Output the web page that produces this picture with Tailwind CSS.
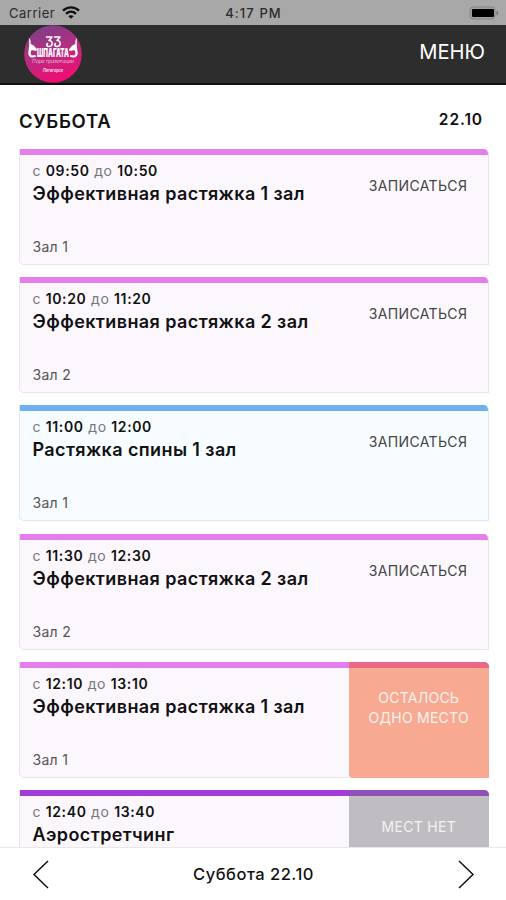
<!DOCTYPE html>
<html lang="ru">
<head>
  <meta charset="UTF-8" />
  <meta name="viewport" content="width=device-width, initial-scale=1.0" />
  <title>Расписание</title>
  <script src="https://cdn.jsdelivr.net/npm/@tailwindcss/browser@4"></script>
</head>
<body class="bg-white h-[900px] overflow-hidden flex flex-col font-['Inter','Liberation_Sans',sans-serif] text-[#111]">

  <!-- status bar -->
  <div class="h-[25px] shrink-0 bg-[#a8a8a8] grid grid-cols-3 items-center pl-[9px] pr-[6px] text-[13px] leading-[23px] text-[#2b2b2b]">
    <div class="flex items-center gap-[7px] pt-[2px]">
      <span class="tracking-[0.5px]">Carrier</span>
      <svg class="w-[18px] h-[13px] -mt-[3px]" viewBox="0 0 18 13" fill="none" stroke="#111" stroke-width="2.3">
        <path d="M1 4.6C5.6.2 12.4.2 17 4.6" />
        <path d="M4 7.8c3-2.8 7-2.8 10 0" />
        <path d="M9 12.8 6.3 10.2c1.6-1.4 3.8-1.4 5.4 0z" fill="#111" stroke="none" />
      </svg>
    </div>
    <div class="text-center pt-[2px] pr-[2px] font-medium tracking-[1.1px]">4:17 PM</div>
    <svg class="w-[31px] h-[14px] justify-self-end" viewBox="0 0 31 14">
      <rect x="1" y="1" width="25" height="12" rx="3" fill="#a0a0a0" stroke="#858585" />
      <rect x="3" y="3" width="22" height="8" rx="1" fill="#000" />
      <path d="M27.5 4.5v5c2.4-.8 2.4-4.2 0-5z" fill="#777" />
    </svg>
  </div>

  <!-- header -->
  <header class="h-[60px] shrink-0 bg-[#2d2d2d] border-b-2 border-[#111] flex items-center justify-between pl-[24px] pr-[21px]">
    <svg class="w-[58px] h-[58px]" viewBox="0 0 58 58">
      <defs>
        <linearGradient id="logo" x1="0.3" y1="0" x2="0.6" y2="1">
          <stop offset="0" stop-color="#7d3f86" />
          <stop offset="0.5" stop-color="#b92c80" />
          <stop offset="1" stop-color="#f40b72" />
        </linearGradient>
      </defs>
      <circle cx="29" cy="29" r="28.8" fill="url(#logo)" />
      <g fill="none" stroke="#fff" stroke-width="1.6" stroke-linecap="round" stroke-linejoin="round">
        <path d="M22.500 12h5.500l-3 3.500c4.500 0 4 6 0 6-2.500 0-3-2-1.500-3M30.500 12H36l-3 3.500c4.500 0 4 6 0 6-2.500 0-3-2-1.500-3" />
      </g>
      <g fill="#fff">
        <path d="M5 13c1.600 1 1.700 3 1.700 6l3 1.500 3.500 4-1 1.500-4.500-1c-1.500 2-1.300 4 0 5.500l4-.5v2c-5 1.500-8-.5-7.300-5C5 23 5.600 18 5 13z" />
        <path d="M53 13c-1.600 1-1.700 3-1.700 6l-3 1.500-3.500 4 1 1.500 4.500-1c1.500 2 1.300 4 0 5.500l-4-.5v2c5 1.500 8-.5 7.300-5C53 23 52.400 18 53 13z" />
      </g>
      <text x="29" y="32" text-anchor="middle" textLength="32" lengthAdjust="spacingAndGlyphs" font-size="11.500" font-weight="900" fill="#fff">ШПАГАТА</text>
      <text x="29" y="37.500" text-anchor="middle" textLength="42" lengthAdjust="spacingAndGlyphs" font-size="4.500" font-style="italic" fill="#fff" fill-opacity="0.65">Парк гравитации</text>
      <text x="29" y="46.500" text-anchor="middle" textLength="20" lengthAdjust="spacingAndGlyphs" font-size="5" font-weight="700" font-style="italic" fill="#fff" fill-opacity="0.85">Пятигорск</text>
    </svg>
    <button class="text-[20.2px] text-white -mt-[3px]">МЕНЮ</button>
  </header>

  <!-- schedule -->
  <main class="flex-1 min-h-0 overflow-hidden pl-[19px] pr-[17px]">
    <div class="h-[63.5px] flex justify-between pr-[6px] font-semibold">
      <h1 class="text-[18.5px] leading-[24px] pt-[24px] tracking-[0.65px]">СУББОТА</h1>
      <span class="text-[15.5px] leading-[20px] pt-[25px] tracking-[0.9px]">22.10</span>
    </div>

    <div class="flex flex-col gap-[12.4px]">
      <div class="h-[116px] shrink-0 flex rounded-tr-[5px] rounded-bl-[5px] border border-t-0 border-[#e8e4ea] bg-[#fbf7fd] relative overflow-hidden">
        <div class="absolute top-0 inset-x-0 h-[6px] bg-[#e27fec]"></div>
        <div class="flex-1 flex flex-col pl-[12.5px] pt-[13px]">
          <p class="text-[14px] leading-[18px] tracking-[0.63px] text-[#777]">с <b class="font-semibold text-[#111]">09:50</b> до <b class="font-semibold text-[#111]">10:50</b></p>
          <h2 class="text-[18px] leading-[28px] font-semibold tracking-[0.4px]">Эффективная растяжка 1 зал</h2>
          <p class="text-[14px] leading-[18px] tracking-[0.3px] text-[#555] mt-auto mb-[8px]">Зал 1</p>
        </div>
        <div class="w-[140px] text-center pt-[27px] text-[14px] leading-[19px] tracking-[0.35px] text-[#444]">ЗАПИСАТЬСЯ</div>
      </div>

      <div class="h-[116px] shrink-0 flex rounded-tr-[5px] rounded-bl-[5px] border border-t-0 border-[#e8e4ea] bg-[#fbf7fd] relative overflow-hidden">
        <div class="absolute top-0 inset-x-0 h-[6px] bg-[#e27fec]"></div>
        <div class="flex-1 flex flex-col pl-[12.5px] pt-[13px]">
          <p class="text-[14px] leading-[18px] tracking-[0.63px] text-[#777]">с <b class="font-semibold text-[#111]">10:20</b> до <b class="font-semibold text-[#111]">11:20</b></p>
          <h2 class="text-[18px] leading-[28px] font-semibold tracking-[0.4px]">Эффективная растяжка 2 зал</h2>
          <p class="text-[14px] leading-[18px] tracking-[0.3px] text-[#555] mt-auto mb-[8px]">Зал 2</p>
        </div>
        <div class="w-[140px] text-center pt-[27px] text-[14px] leading-[19px] tracking-[0.35px] text-[#444]">ЗАПИСАТЬСЯ</div>
      </div>

      <div class="h-[116px] shrink-0 flex rounded-tr-[5px] rounded-bl-[5px] border border-t-0 border-[#e2e8ec] bg-[#f6fcff] relative overflow-hidden">
        <div class="absolute top-0 inset-x-0 h-[6px] bg-[#6fb1f0]"></div>
        <div class="flex-1 flex flex-col pl-[12.5px] pt-[13px]">
          <p class="text-[14px] leading-[18px] tracking-[0.63px] text-[#777]">с <b class="font-semibold text-[#111]">11:00</b> до <b class="font-semibold text-[#111]">12:00</b></p>
          <h2 class="text-[18px] leading-[28px] font-semibold tracking-[0.4px]">Растяжка спины 1 зал</h2>
          <p class="text-[14px] leading-[18px] tracking-[0.3px] text-[#555] mt-auto mb-[8px]">Зал 1</p>
        </div>
        <div class="w-[140px] text-center pt-[27px] text-[14px] leading-[19px] tracking-[0.35px] text-[#444]">ЗАПИСАТЬСЯ</div>
      </div>

      <div class="h-[116px] shrink-0 flex rounded-tr-[5px] rounded-bl-[5px] border border-t-0 border-[#e8e4ea] bg-[#fbf7fd] relative overflow-hidden">
        <div class="absolute top-0 inset-x-0 h-[6px] bg-[#e27fec]"></div>
        <div class="flex-1 flex flex-col pl-[12.5px] pt-[13px]">
          <p class="text-[14px] leading-[18px] tracking-[0.63px] text-[#777]">с <b class="font-semibold text-[#111]">11:30</b> до <b class="font-semibold text-[#111]">12:30</b></p>
          <h2 class="text-[18px] leading-[28px] font-semibold tracking-[0.4px]">Эффективная растяжка 2 зал</h2>
          <p class="text-[14px] leading-[18px] tracking-[0.3px] text-[#555] mt-auto mb-[8px]">Зал 2</p>
        </div>
        <div class="w-[140px] text-center pt-[27px] text-[14px] leading-[19px] tracking-[0.35px] text-[#444]">ЗАПИСАТЬСЯ</div>
      </div>

      <div class="h-[116px] shrink-0 flex rounded-tr-[5px] rounded-bl-[5px] border-l border-[#e8e4ea] bg-[#fbf7fd] relative overflow-hidden">
        <div class="absolute top-0 inset-x-0 h-[6px] bg-[#e27fec]"></div>
        <div class="flex-1 flex flex-col pl-[12.5px] pt-[13px] border-b border-[#e8e4ea]">
          <p class="text-[14px] leading-[18px] tracking-[0.63px] text-[#777]">с <b class="font-semibold text-[#111]">12:10</b> до <b class="font-semibold text-[#111]">13:10</b></p>
          <h2 class="text-[18px] leading-[28px] font-semibold tracking-[0.4px]">Эффективная растяжка 1 зал</h2>
          <p class="text-[14px] leading-[18px] tracking-[0.3px] text-[#555] mt-auto mb-[8px]">Зал 1</p>
        </div>
        <div class="relative w-[140.5px] rounded-bl-[4px] overflow-hidden bg-[#f7a991] text-center pt-[26px] text-[14px] leading-[19.500px] tracking-[0.25px] text-white/85">
          <div class="absolute top-0 inset-x-0 h-[6px] bg-[#ea6786]"></div>
          ОСТАЛОСЬ<br>ОДНО МЕСТО
        </div>
      </div>

      <div class="h-[116px] shrink-0 flex rounded-tr-[5px] rounded-bl-[5px] border-l border-[#e8e4ea] bg-[#fbf7fd] relative overflow-hidden">
        <div class="absolute top-0 inset-x-0 h-[6px] bg-[#a23cdb]"></div>
        <div class="flex-1 flex flex-col pl-[12.5px] pt-[13px]">
          <p class="text-[14px] leading-[18px] tracking-[0.63px] text-[#777]">с <b class="font-semibold text-[#111]">12:40</b> до <b class="font-semibold text-[#111]">13:40</b></p>
          <h2 class="text-[18px] leading-[28px] font-semibold tracking-[0.4px]">Аэростретчинг</h2>
        </div>
        <div class="relative w-[140.5px] bg-[#c0bdc2] text-center pt-[27px] text-[14px] leading-[19px] tracking-[0.3px] text-white/80">
          <div class="absolute top-0 inset-x-0 h-[6px] bg-[#9150b5]"></div>
          МЕСТ НЕТ
        </div>
      </div>
    </div>
  </main>

  <!-- day switcher -->
  <footer class="h-[53px] shrink-0 bg-white border-t border-[#e8e8e8] flex items-center justify-between pl-[32px] pr-[31px]">
    <svg class="w-[17px] h-[29px] mt-[1px]" viewBox="0 0 17 29" fill="none" stroke="#111" stroke-width="1.5"><path d="M16 1 2 14.500l14 13.500" /></svg>
    <span class="text-[16.5px] leading-[22px] font-medium tracking-[0.5px] -mt-px">Суббота 22.10</span>
    <svg class="w-[17px] h-[29px] mt-[1px]" viewBox="0 0 17 29" fill="none" stroke="#111" stroke-width="1.5"><path d="m1 1 14 13.500L1 28" /></svg>
  </footer>

</body>
</html>
